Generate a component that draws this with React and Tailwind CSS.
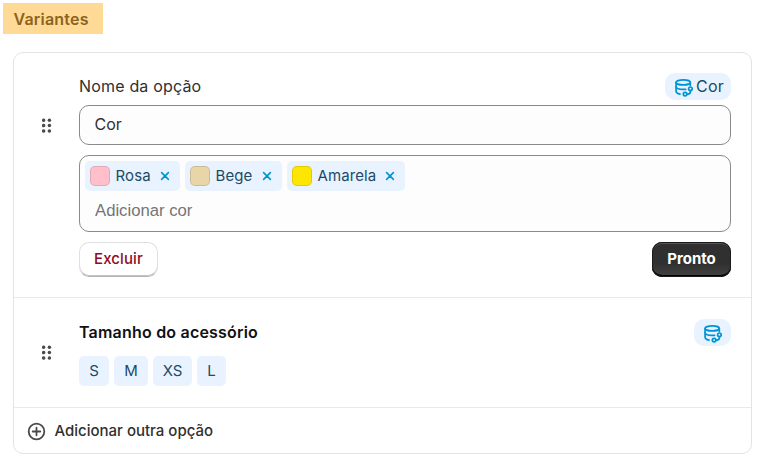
import { useState } from "react";

const initialColors = [
  { name: "Rosa", swatch: "bg-[#ffc0cb]", width: "w-[95px]" },
  { name: "Bege", swatch: "bg-[#e8d6a8]", width: "w-[97px]" },
  { name: "Amarela", swatch: "bg-[#ffe600]", width: "w-[118px]" },
];

const sizes = [
  { name: "S", width: "w-[30px]" },
  { name: "M", width: "w-[34px]" },
  { name: "XS", width: "w-[39px]" },
  { name: "L", width: "w-[29px]" },
];

function DragHandle() {
  return (
    <svg width="10" height="15" viewBox="0.3 0 10 15" fill="#4a4a4a" className="shrink-0">
      <circle cx="2" cy="2.3" r="1.75" />
      <circle cx="7.7" cy="2.3" r="1.75" />
      <circle cx="2" cy="7.6" r="1.75" />
      <circle cx="7.7" cy="7.6" r="1.75" />
      <circle cx="2" cy="12.9" r="1.75" />
      <circle cx="7.7" cy="12.9" r="1.75" />
    </svg>
  );
}

function MetafieldIcon() {
  return (
    <svg
      width="20"
      height="20"
      viewBox="0 0 20 20"
      fill="none"
      stroke="#0094d5"
      strokeWidth="1.7"
      strokeLinecap="round"
      className="shrink-0 overflow-visible"
    >
      <ellipse cx="10.2" cy="5.4" rx="7.1" ry="2.5" />
      <path d="M3.1 5.4v8.8c0 1.3 1.5 2.4 3.9 2.9" />
      <path d="M17.3 5.4v3" />
      <path d="M3.1 9.8c0 1.5 3.1 2.6 7.1 2.6 .9 0 1.7 0 2.4-.1" />
      <circle cx="17.4" cy="11.8" r="1.8" />
      <circle cx="12.1" cy="17.1" r="1.8" />
      <path d="M17.4 13.7v.8c0 1.5-1 2.6-2.6 2.6h-.7" />
    </svg>
  );
}

function ColorTag({ color, onRemove }) {
  return (
    <span className={`flex h-[30px] items-center rounded-[5px] bg-[#e8f3ff] pl-[5px] text-[15px] text-[#1d4a66] ${color.width}`}>
      <span className={`size-5 shrink-0 rounded-[5px] border border-black/12 ${color.swatch}`} />
      <span className="ml-[5.5px] tracking-[0.1px]">{color.name}</span>
      <button onClick={onRemove} className="mr-[10px] ml-auto" aria-label={`Remover ${color.name}`}>
        <svg width="10" height="10" viewBox="0 0 10 10" stroke="#0094d5" strokeWidth="1.6" strokeLinecap="round">
          <path d="M1.6 1.6l6.8 6.8M8.4 1.6L1.6 8.4" />
        </svg>
      </button>
    </span>
  );
}

export default function App() {
  const [name, setName] = useState("Cor");
  const [colors, setColors] = useState(initialColors);

  function removeColor(colorName) {
    setColors(colors.filter((c) => c.name !== colorName));
  }

  return (
    <div className="h-[463px] w-[758px] overflow-hidden bg-white pt-[3px] font-['Inter',sans-serif] text-[#303030]">
      <h2 className="ml-[3px] flex h-[31px] w-[100px] items-center bg-[#ffda96] pl-[10.5px] text-base font-semibold tracking-[0.2px] text-[#8a6420]">
        Variantes
      </h2>

      <div className="mt-[18px] ml-[13px] h-[402px] w-[739px] rounded-[10px] border border-[#e3e3e3]">
        <section className="flex h-[245px] border-b border-[#e9e9e9] pr-5 pl-7">
          <div className="mt-[65px] w-[37px]">
            <DragHandle />
          </div>
          <div className="flex-1">
            <div className="mt-5 flex h-[27px] items-center justify-between">
              <label className="pb-[2px] text-base tracking-[0.18px]">Nome da opção</label>
              <span className="flex h-[27px] w-[66px] items-center gap-[3px] rounded-[10px] bg-[#e8f3ff] pl-2 text-base text-[#1d4a66]">
                <MetafieldIcon />
                <span className="pb-px tracking-[0.2px]">Cor</span>
              </span>
            </div>
            <input
              value={name}
              onChange={(e) => setName(e.target.value)}
              className="mt-[5px] block h-10 w-full rounded-[10px] border border-[#8a8a8a] bg-[#fdfdfd] px-[14.5px] pb-[2px] text-base outline-none"
            />
            <div className="mt-[10px] h-[77px] rounded-[10px] border border-[#8a8a8a] bg-[#fdfdfd] p-[5px]">
              <div className="flex gap-[5px]">
                {colors.map((color) => (
                  <ColorTag key={color.name} color={color} onRemove={() => removeColor(color.name)} />
                ))}
              </div>
              <input
                placeholder="Adicionar cor"
                className="mt-[8px] block h-6 w-full bg-transparent px-[10px] font-['Liberation_Sans',sans-serif] text-[16.7px] outline-none placeholder:text-[#757575]"
              />
            </div>
            <div className="mt-[10px] flex justify-between">
              <button className="h-[35px] w-[79px] rounded-[10px] border border-[#e0e0e0] border-b-[#b5b5b5] bg-white text-[15px] font-medium tracking-[0.1px] text-[#8e0b21] shadow-[inset_0_-1px_0_#c4c4c4]">
                Excluir
              </button>
              <button className="h-[35px] w-[79px] rounded-[10px] bg-linear-to-b from-[#303030] from-60% to-[#424242] text-[15px] font-bold text-white shadow-[inset_0_0_0_1px_#1a1a1a,inset_0_-2px_0_#000,inset_0_2px_0_#555]">
                Pronto
              </button>
            </div>
          </div>
        </section>

        <section className="flex h-[110px] border-b border-[#e9e9e9] pr-5 pl-7">
          <div className="mt-[47px] w-[37px]">
            <DragHandle />
          </div>
          <div className="flex-1">
            <div className="mt-[21px] flex h-[27px] items-center justify-between">
              <h3 className="pb-[2px] text-base font-semibold tracking-[0.2px] text-[#111]">Tamanho do acessório</h3>
              <span className="flex h-[27px] w-[37px] items-center rounded-[10px] bg-[#e8f3ff] pl-2">
                <MetafieldIcon />
              </span>
            </div>
            <div className="mt-[10px] flex gap-[5px]">
              {sizes.map((size) => (
                <span
                  key={size.name}
                  className={`flex h-[30px] items-center justify-center rounded-[5px] bg-[#e8f3ff] text-[15px] text-[#1d4a66] ${size.width}`}
                >
                  {size.name}
                </span>
              ))}
            </div>
          </div>
        </section>

        <button className="flex h-[46px] w-full items-center gap-[8.5px] pl-[13px] text-[15px] font-medium">
          <svg width="19" height="19" viewBox="0 0 19 19" fill="none" stroke="#4a4a4a" strokeWidth="1.8" strokeLinecap="round">
            <circle cx="9.5" cy="9.5" r="7.8" />
            <path d="M9.5 5.7v7.6M5.7 9.5h7.6" />
          </svg>
          <span className="pt-px">Adicionar outra opção</span>
        </button>
      </div>
    </div>
  );
}
